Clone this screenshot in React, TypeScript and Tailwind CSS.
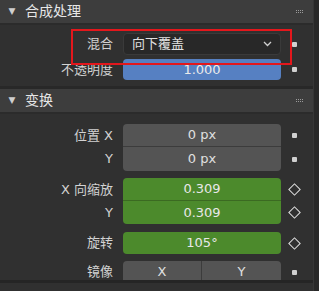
import React from 'react';

const font = { fontFamily: '"DejaVu Sans", "Noto Sans CJK SC", sans-serif' };

const Grip = () => (
  <div className="grid grid-cols-4 gap-[1px]">
    {Array.from({ length: 8 }).map((_, i) => (
      <div key={i} className="w-[1px] h-[1px] bg-[#9a9a9a]" />
    ))}
  </div>
);

const Header = ({ title }: { title: string }) => (
  <div className="h-[25px] bg-[#3d3d3d] flex items-center border-b-2 border-[#2b2b2b]">
    <span className="w-[24px] text-center text-[9px] text-[#cfcfcf]">▼</span>
    <span className="text-[14px] text-[#e6e6e6] ml-[1px]">{title}</span>
    <div className="ml-auto mr-[10px] flex flex-col gap-[1px]">
      <Grip />
    </div>
  </div>
);

const Dot = () => <div className="w-[5px] h-[5px] rounded-[1px] bg-[#d0d0d0]" />;
const Diamond = () => <div className="w-[9px] h-[9px] rotate-45 border-[1.5px] border-[#e0e0e0]" />;

const Row = ({ label, children, icon, h = 'h-[23px]' }: { label: string; children: React.ReactNode; icon?: React.ReactNode; h?: string }) => (
  <div className={`flex items-center ${h}`}>
    <div className="w-[123px] pr-[10px] text-right text-[13px] text-[#d2d2d2]">{label}</div>
    <div className="w-[158px] h-full">{children}</div>
    <div className="w-[26px] flex items-center justify-center">{icon}</div>
  </div>
);

export default function App() {
  return (
    <div className="w-[319px] h-[291px] bg-[#303030] flex overflow-hidden relative" style={font}>
      <div className="flex-1 flex flex-col">
        <Header title="合成处理" />
        <div className="pt-[8px] pb-[6px] flex flex-col gap-[4px]">
          <Row label="混合" h="h-[22px]" icon={<Dot />}>
            <div className="h-full rounded-[4px] bg-[#282828] border border-[#3a3a3a] flex items-center px-[8px] text-[13px] text-[#e0e0e0]">
              <span>向下覆盖</span>
              <svg className="ml-auto" width="9" height="6" viewBox="0 0 9 6">
                <path d="M1 1 L4.5 4.5 L8 1" fill="none" stroke="#d0d0d0" strokeWidth="1.3" />
              </svg>
            </div>
          </Row>
          <Row label="不透明度" h="h-[21px]" icon={<Dot />}>
            <div className="h-full rounded-[4px] bg-[#5680c2] flex items-center justify-center text-[13px] text-[#eaeaea]">1.000</div>
          </Row>
        </div>
        <div className="h-[3px] bg-[#282828]" />
        <Header title="变换" />
        <div className="pt-[10px] flex flex-col">
          <div className="flex flex-col">
            <Row label="位置 X" icon={<Dot />}>
              <div className="h-full rounded-t-[4px] bg-[#545454] border-b border-[#3c3c3c] flex items-center justify-center text-[13px] text-[#e0e0e0]">0 px</div>
            </Row>
            <Row label="Y" h="h-[24px]" icon={<Dot />}>
              <div className="h-full rounded-b-[4px] bg-[#545454] flex items-center justify-center text-[13px] text-[#e0e0e0]">0 px</div>
            </Row>
          </div>
          <div className="flex flex-col mt-[7px]">
            <Row label="X 向缩放" icon={<Diamond />}>
              <div className="h-full rounded-t-[4px] bg-[#4c8a2c] border-b border-[#3b6a22] flex items-center justify-center text-[13px] text-[#e8e8e8]">0.309</div>
            </Row>
            <Row label="Y" icon={<Diamond />}>
              <div className="h-full rounded-b-[4px] bg-[#4c8a2c] flex items-center justify-center text-[13px] text-[#e8e8e8]">0.309</div>
            </Row>
          </div>
          <div className="mt-[8px]">
            <Row label="旋转" h="h-[22px]" icon={<Diamond />}>
              <div className="h-full rounded-[4px] bg-[#4c8a2c] flex items-center justify-center text-[13px] text-[#e8e8e8]">105°</div>
            </Row>
          </div>
          <div className="mt-[7px]">
            <Row label="镜像" h="h-[22px]" icon={<Dot />}>
              <div className="h-full rounded-t-[4px] bg-[#545454] flex text-[13px] text-[#e0e0e0]">
                <div className="flex-1 flex items-center justify-center border-r border-[#3c3c3c]">X</div>
                <div className="w-[79px] flex items-center justify-center">Y</div>
              </div>
            </Row>
          </div>
          <div className="h-[3px] bg-[#252525] -mt-[3px]" />
        </div>
      </div>
      <div className="w-[6px] bg-[#282828] border-l border-[#363636]" />
      <div className="absolute left-[71px] top-[29px] w-[221px] h-[36px] border-2 border-[#e3171c]" />
    </div>
  );
}
